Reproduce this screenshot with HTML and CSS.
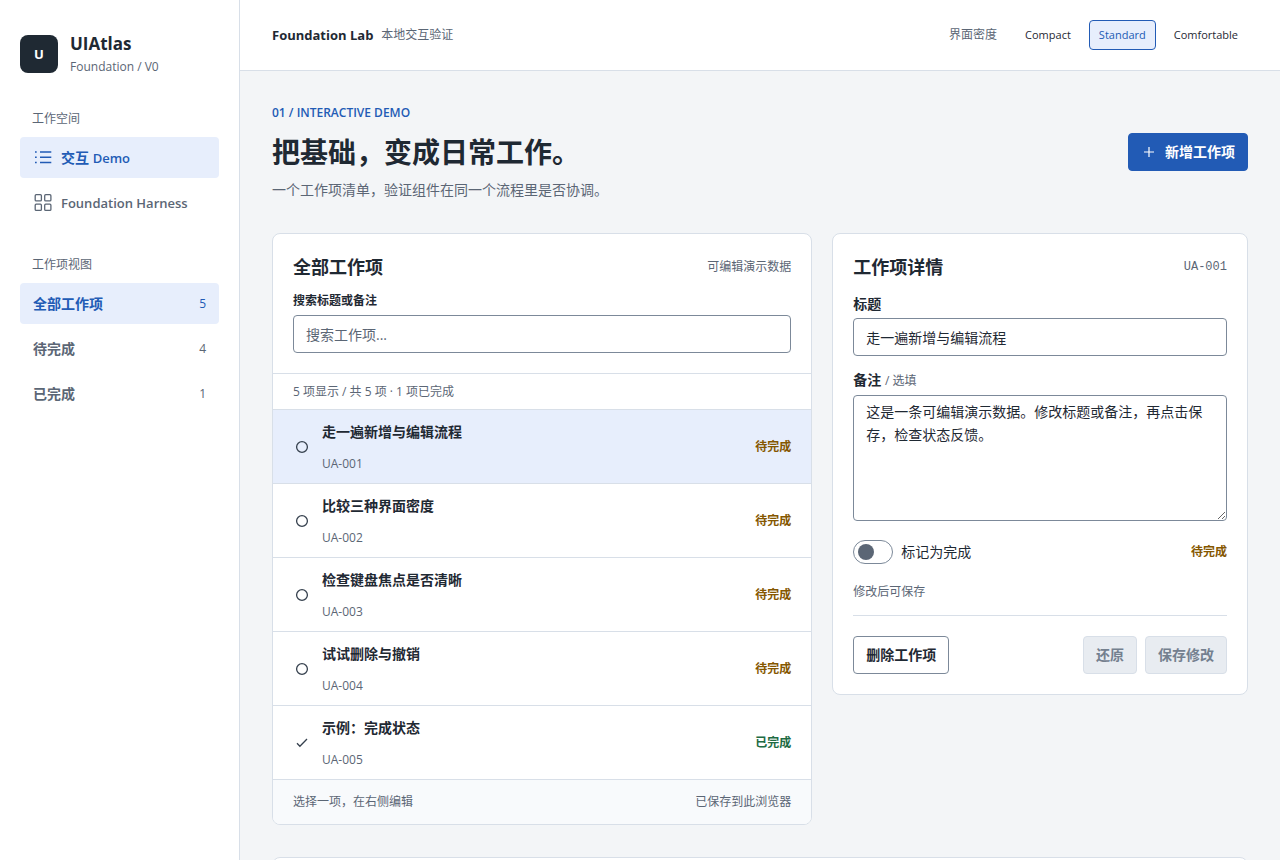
FILE: index.html
```html
<!DOCTYPE html>
<html lang="zh-CN">
<head>
<meta charset="utf-8">
<meta name="viewport" content="width=device-width, initial-scale=1">
<title>UIAtlas Foundation Lab</title>
<link rel="stylesheet" href="styles.css">
</head>
<body>
<div class="app">
  <aside class="sidebar">
    <div class="brand">
      <span class="brand-mark">U</span>
      <div>
        <div class="brand-name">UIAtlas</div>
        <div class="brand-sub">Foundation / V0</div>
      </div>
    </div>
    <nav class="nav-group" aria-label="工作空间">
      <p class="nav-label">工作空间</p>
      <a class="nav-item nav-link active" href="#demo" aria-current="page">
        <svg class="nav-icon" viewBox="0 0 18 18" fill="none" stroke="currentColor" stroke-width="1.5"><path d="M6 3h11.3M6 8.2h11.3M6 13.4h11.3M1 3h1.7M1 8.2h1.7M1 13.4h1.7"/></svg>
        <span>交互 <span class="latin">Demo</span></span>
      </a>
      <a class="nav-item nav-link" href="#harness">
        <svg class="nav-icon" viewBox="0 0 18 18" fill="none" stroke="currentColor" stroke-width="1.3"><rect x="1.2" y="0.7" width="6.2" height="6.2" rx="1"/><rect x="10.7" y="0.7" width="6.2" height="6.2" rx="1"/><rect x="1.2" y="10.2" width="6.2" height="6.2" rx="1"/><rect x="10.7" y="10.2" width="6.2" height="6.2" rx="1"/></svg>
        <span class="latin">Foundation Harness</span>
      </a>
    </nav>
    <div class="nav-group">
      <p class="nav-label">工作项视图</p>
      <button class="nav-item active" type="button" aria-pressed="true">全部工作项<span class="count">5</span></button>
      <button class="nav-item" type="button">待完成<span class="count">4</span></button>
      <button class="nav-item" type="button">已完成<span class="count">1</span></button>
    </div>
  </aside>

  <div class="page">
    <header class="topbar">
      <div class="topbar-title"><strong class="latin">Foundation Lab</strong><span class="muted">本地交互验证</span></div>
      <div class="density" role="group" aria-label="界面密度">
        <span class="density-label">界面密度</span>
        <button class="density-btn" type="button">Compact</button>
        <button class="density-btn selected" type="button" aria-pressed="true">Standard</button>
        <button class="density-btn" type="button">Comfortable</button>
      </div>
    </header>

    <main class="main" id="demo">
      <div class="page-head">
        <div>
          <p class="eyebrow">01 / INTERACTIVE DEMO</p>
          <h1>把基础，变成日常工作。</h1>
          <p class="lead">一个工作项清单，验证组件在同一个流程里是否协调。</p>
        </div>
        <button class="btn primary" type="button">
          <svg class="plus" viewBox="0 0 16 16" fill="none" stroke="currentColor" stroke-width="1.2"><path d="M8 3v10M3 8h10"/></svg>
          新增工作项
        </button>
      </div>

      <div class="columns">
        <section class="panel">
          <div class="list-head">
            <div class="panel-title"><h2>全部工作项</h2><span class="muted">可编辑演示数据</span></div>
            <label class="search-label" for="search">搜索标题或备注</label>
            <input class="field" id="search" type="search" placeholder="搜索工作项...">
          </div>
          <p class="summary">5 项显示 / 共 5 项 · 1 项已完成</p>
          <ul class="items">
            <li><button class="item current" type="button">
              <svg class="state" viewBox="0 0 18 18" fill="none" stroke="currentColor" stroke-width="1.3"><circle cx="9" cy="9" r="5.4"/></svg>
              <span class="item-text"><span class="item-title">走一遍新增与编辑流程</span><span class="muted">UA-001</span></span>
              <span class="status">待完成</span></button></li>
            <li><button class="item" type="button">
              <svg class="state" viewBox="0 0 18 18" fill="none" stroke="currentColor" stroke-width="1.3"><circle cx="9" cy="9" r="5.4"/></svg>
              <span class="item-text"><span class="item-title">比较三种界面密度</span><span class="muted">UA-002</span></span>
              <span class="status">待完成</span></button></li>
            <li><button class="item" type="button">
              <svg class="state" viewBox="0 0 18 18" fill="none" stroke="currentColor" stroke-width="1.3"><circle cx="9" cy="9" r="5.4"/></svg>
              <span class="item-text"><span class="item-title">检查键盘焦点是否清晰</span><span class="muted">UA-003</span></span>
              <span class="status">待完成</span></button></li>
            <li><button class="item" type="button">
              <svg class="state" viewBox="0 0 18 18" fill="none" stroke="currentColor" stroke-width="1.3"><circle cx="9" cy="9" r="5.4"/></svg>
              <span class="item-text"><span class="item-title">试试删除与撤销</span><span class="muted">UA-004</span></span>
              <span class="status">待完成</span></button></li>
            <li><button class="item" type="button">
              <svg class="state" viewBox="0 0 18 18" fill="none" stroke="currentColor" stroke-width="1.3"><path d="M4 9.3l2.9 3L14 5"/></svg>
              <span class="item-text"><span class="item-title">示例：完成状态</span><span class="muted">UA-005</span></span>
              <span class="status done">已完成</span></button></li>
          </ul>
          <footer class="list-foot"><span>选择一项，在右侧编辑</span><span>已保存到此浏览器</span></footer>
        </section>

        <form class="panel detail">
          <div class="panel-title"><h2>工作项详情</h2><code class="item-id">UA-001</code></div>
          <div class="form-row">
            <label class="form-label" for="title">标题</label>
            <input class="field" id="title" type="text" value="走一遍新增与编辑流程">
          </div>
          <div class="form-row">
            <label class="form-label" for="note">备注 <span class="optional">/ 选填</span></label>
            <textarea class="field area" id="note">这是一条可编辑演示数据。修改标题或备注，再点击保存，检查状态反馈。</textarea>
          </div>
          <div class="switch-row">
            <label class="switch-label"><input class="switch" type="checkbox" role="switch">标记为完成</label>
            <span class="status">待完成</span>
          </div>
          <p class="hint">修改后可保存</p>
          <div class="actions">
            <button class="btn" type="button">删除工作项</button>
            <div class="action-group">
              <button class="btn" type="reset" disabled>还原</button>
              <button class="btn" type="submit" disabled>保存修改</button>
            </div>
          </div>
        </form>
      </div>

      <section class="panel next-panel"></section>
    </main>
  </div>
</div>
</body>
</html>
```

FILE: styles.css
```css
:root {
  --ink: #1f2933;
  --muted: #5b6675;
  --accent: #225bb5;
  --accent-soft: #e7eefc;
  --line: #d8dfe8;
  --control: #7c8999;
}

* { box-sizing: border-box; }

body {
  margin: 0;
  background: #f3f5f7;
  color: var(--ink);
  font: 14px/22px "Open Sans", "Noto Sans CJK SC", sans-serif;
}

p, h1, h2, ul { margin: 0; padding: 0; }

button, input, textarea { font: inherit; color: inherit; }

button { cursor: pointer; }

.muted { color: var(--muted); font-size: 12px; line-height: 18px; }
.latin { font-size: 13px; }

.app {
  display: grid;
  grid-template-columns: 240px minmax(0, 1fr);
  height: 100vh;
  overflow: hidden;
}

/* Sidebar */
.sidebar {
  display: flex;
  flex-direction: column;
  gap: 32px;
  padding: 31px 20px;
  background: #fff;
  border-right: 1px solid var(--line);
}

.brand { display: flex; align-items: center; gap: 12px; }

.brand-mark {
  display: grid;
  place-items: center;
  width: 38px;
  height: 38px;
  border-radius: 8px;
  background: var(--ink);
  color: #fff;
  font-size: 13px;
  font-weight: 700;
}

.brand-name { font-size: 17px; line-height: 26px; font-weight: 700; }
.brand-sub { color: var(--muted); font-size: 12px; line-height: 20px; }

.nav-group { display: flex; flex-direction: column; gap: 4px; }

.nav-label {
  padding: 0 12px;
  margin-bottom: 4px;
  color: var(--muted);
  font-size: 12px;
  line-height: 20px;
}

.nav-item {
  display: flex;
  align-items: center;
  gap: 9px;
  height: 41px;
  padding: 0 13px;
  border: 0;
  border-radius: 4px;
  background: none;
  color: var(--muted);
  font-weight: 600;
  text-decoration: none;
}

.nav-link { padding: 0 14px; }
.nav-item.active { background: var(--accent-soft); color: var(--accent); }
.nav-icon { width: 18px; height: 18px; }
.count { margin-left: auto; font-size: 12px; font-weight: 400; }

/* Top bar */
.page { overflow: auto; scrollbar-width: none; }

.topbar {
  display: flex;
  align-items: center;
  justify-content: space-between;
  height: 71px;
  padding: 0 32px;
  background: #fff;
  border-bottom: 1px solid var(--line);
}

.topbar-title { display: flex; align-items: center; gap: 8px; }
.density { display: flex; align-items: center; gap: 8px; font-size: 12px; }
.density-label { margin-right: 10px; color: var(--muted); }

.density-btn {
  height: 30px;
  padding: 0 9px;
  border: 1px solid transparent;
  border-radius: 4px;
  background: none;
  font-size: 11px;
}

.density-btn.selected {
  border-color: var(--accent);
  background: var(--accent-soft);
  color: var(--accent);
}

/* Page heading */
.main { padding: 32px; }

.page-head {
  display: flex;
  align-items: center;
  justify-content: space-between;
  margin-bottom: 32px;
}

.eyebrow { color: var(--accent); font-size: 12px; line-height: 20px; font-weight: 600; }
h1 { margin: 11px 0 9px; font-size: 28px; line-height: 36px; font-weight: 700; }
.lead { color: var(--muted); }

.btn {
  display: inline-flex;
  align-items: center;
  gap: 8px;
  height: 38px;
  padding: 0 12px;
  border: 1px solid var(--control);
  border-radius: 4px;
  background: #fff;
  font-weight: 600;
}

.btn.primary { border-color: var(--accent); background: var(--accent); color: #fff; }

.btn:disabled {
  border-color: var(--line);
  background: #e8ecf1;
  color: #74808f;
  cursor: default;
}

.plus { width: 16px; height: 16px; }

/* Panels */
.columns {
  display: grid;
  grid-template-columns: minmax(0, 13fr) minmax(0, 10fr);
  align-items: start;
  gap: 20px;
}

.panel {
  overflow: hidden;
  border: 1px solid var(--line);
  border-radius: 8px;
  background: #fff;
}

.panel-title { display: flex; align-items: center; justify-content: space-between; }
h2 { font-size: 18px; line-height: 26px; font-weight: 700; }

.field {
  display: block;
  width: 100%;
  height: 38px;
  padding: 0 12px;
  border: 1px solid var(--control);
  border-radius: 4px;
  background: #fff;
}

.field::placeholder { color: var(--muted); opacity: 1; }

.list-head { padding: 20px; border-bottom: 1px solid var(--line); }

.search-label {
  display: block;
  margin: 12px 0 5px;
  font-size: 12px;
  line-height: 18px;
  font-weight: 600;
}

.summary {
  padding: 9px 20px 8px;
  border-bottom: 1px solid var(--line);
  color: var(--muted);
  font-size: 12px;
  line-height: 18px;
}

.items { list-style: none; }

.item {
  display: flex;
  align-items: center;
  gap: 11px;
  width: 100%;
  height: 74px;
  padding: 0 20px;
  border: 0;
  border-bottom: 1px solid var(--line);
  background: #fff;
  text-align: left;
}

.item.current { background: var(--accent-soft); }
.state { width: 18px; height: 18px; color: #36414e; }
.item-text { display: flex; flex: 1; flex-direction: column; gap: 12px; }
.item-title { font-weight: 600; }

.status { color: #855700; font-size: 12px; line-height: 18px; font-weight: 600; }
.status.done { color: #216b43; }

.list-foot {
  display: flex;
  justify-content: space-between;
  padding: 13px 20px;
  background: #f8fafc;
  color: var(--muted);
  font-size: 12px;
  line-height: 18px;
}

/* Detail form */
.detail { padding: 20px; }
.item-id { color: var(--muted); font: 12px/18px "Liberation Mono", monospace; }
.form-row { margin-top: 14px; }
.form-label { display: block; margin-bottom: 5px; line-height: 19px; font-weight: 600; }
.optional { color: var(--muted); font-size: 12px; font-weight: 400; }
.area { height: 126px; padding: 4px 12px; line-height: 23px; resize: vertical; }

.switch-row {
  display: flex;
  align-items: center;
  justify-content: space-between;
  margin-top: 19px;
}

.switch-label { display: flex; align-items: center; gap: 8px; }

.switch {
  appearance: none;
  display: flex;
  align-items: center;
  width: 40px;
  height: 24px;
  margin: 0;
  padding: 0 4px;
  border: 1px solid var(--control);
  border-radius: 12px;
  background: #fff;
}

.switch::before {
  content: "";
  width: 16px;
  height: 16px;
  border-radius: 50%;
  background: var(--muted);
}

.switch:checked { justify-content: flex-end; }

.hint {
  padding: 19px 0 14px;
  border-bottom: 1px solid var(--line);
  color: var(--muted);
  font-size: 12px;
  line-height: 18px;
}

.actions { display: flex; justify-content: space-between; padding-top: 20px; }
.action-group { display: flex; gap: 8px; }

.next-panel { min-height: 120px; margin-top: 32px; }
```
